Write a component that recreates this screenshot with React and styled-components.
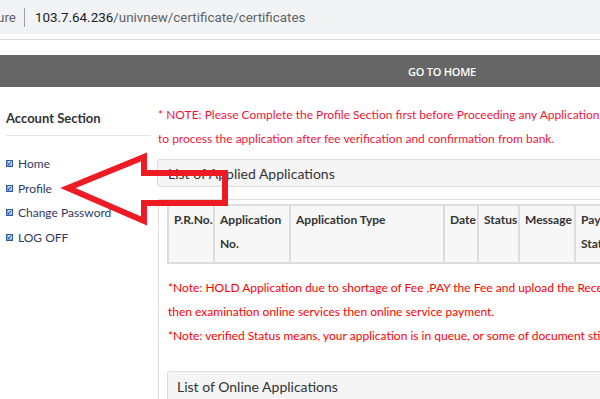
import styled, { createGlobalStyle } from 'styled-components';

const GlobalStyle = createGlobalStyle`
  html, body {
    margin: 0;
    padding: 0;
    background: #fff;
  }
  body {
    width: 600px;
    height: 399px;
    overflow: hidden;
    font-family: Lato, 'Open Sans', sans-serif;
  }
`;

const menu = ['Home', 'Profile', 'Change Password', 'LOG OFF'];

const columns = [
  { label: 'P.R.No.', w: 46 },
  { label: 'Application No.', w: 76 },
  { label: 'Application Type', w: 154 },
  { label: 'Date', w: 34 },
  { label: 'Status', w: 41 },
  { label: 'Message', w: 56 },
  { label: 'Payment Status', w: 70 },
];

const Bullet = () => (
  <svg width='7' height='7' viewBox='0 0 7 7'>
    <rect x='0.5' y='0.5' width='6' height='6' fill='#7fa6d8' stroke='#2b5d9e' />
    <path d='M2 2h3v3' fill='none' stroke='#fff' strokeWidth='1' />
    <path d='M2 5l3-3' stroke='#1d4f8f' strokeWidth='1' />
  </svg>
);

const Arrow = () => (
  <ArrowSvg width='180' height='90' viewBox='60 145 180 90'>
    <polygon
      points='68,188 144,157 144,173 225,173 225,203 144,203 144,221'
      fill='none'
      stroke='#ed1c24'
      strokeWidth='6'
      strokeLinejoin='miter'
    />
  </ArrowSvg>
);

export default function App() {
  return (
    <>
      <GlobalStyle />
      <Screen>
        <AddressBar>
          <Scheme>ure</Scheme>
          <Sep />
          <Url>
            <Host>103.7.64.236</Host>/univnew/certificate/certificates
          </Url>
        </AddressBar>
        <BarRule />
        <NavBar>
          <NavLink>GO TO HOME</NavLink>
        </NavBar>
        <Page>
          <Sidebar>
            <SideTitle>Account Section</SideTitle>
            <Menu>
              {menu.map((m) => (
                <MenuItem key={m}>
                  <Bullet />
                  {m}
                </MenuItem>
              ))}
            </Menu>
          </Sidebar>
          <Main>
            <TopNote>
              * NOTE: Please Complete the Profile Section first before Proceeding any Application for
              <br />
              to process the application after fee verification and confirmation from bank.
            </TopNote>
            <PanelHead>List of Applied Applications</PanelHead>
            <PanelBody>
              <Table>
                <colgroup>
                  {columns.map((c) => (
                    <col key={c.label} style={{ width: c.w }} />
                  ))}
                </colgroup>
                <thead>
                  <tr>
                    {columns.map((c) => (
                      <Th key={c.label}>{c.label}</Th>
                    ))}
                  </tr>
                </thead>
              </Table>
              <Notes>
                <Note>*Note: HOLD Application due to shortage of Fee ,PAY the Fee and upload the Receipt</Note>
                <Note>then examination online services then online service payment.</Note>
                <Note>*Note: verified Status means, your application is in queue, or some of document still</Note>
              </Notes>
              <InnerHead>List of Online Applications</InnerHead>
            </PanelBody>
          </Main>
          <Arrow />
        </Page>
      </Screen>
    </>
  );
}

const Screen = styled.div`
  width: 600px;
  height: 399px;
  overflow: hidden;
  position: relative;
`;

const AddressBar = styled.div`
  height: 34px;
  background: #f1f3f4;
  display: flex;
  align-items: center;
  font-family: Roboto, 'Noto Sans', sans-serif;
  font-size: 13.4px;
  color: #5f6368;
  white-space: nowrap;
`;

const Scheme = styled.span`
  margin-left: -3px;
  color: #5f6368;
`;

const Sep = styled.span`
  width: 1px;
  height: 19px;
  background: #9aa0a6;
  margin: 0 10px 0 8px;
`;

const Url = styled.span`
  color: #5f6368;
`;

const Host = styled.span`
  color: #202124;
`;

const BarRule = styled.div`
  margin-top: 5px;
  height: 1px;
  background: #dadce0;
`;

const NavBar = styled.div`
  margin-top: 15px;
  height: 32px;
  background: #666;
  display: flex;
  align-items: center;
  padding-left: 408px;
`;

const NavLink = styled.span`
  color: #fff;
  font-family: 'Open Sans', sans-serif;
  font-size: 11px;
  font-weight: 600;
  letter-spacing: -0.25px;
`;

const Page = styled.div`
  display: flex;
  align-items: flex-start;
`;

const Sidebar = styled.div`
  width: 151px;
  flex-shrink: 0;
  padding: 22px 0 0 6px;
`;

const SideTitle = styled.div`
  font-size: 13px;
  font-weight: 700;
  line-height: 18px;
  color: #333;
  padding-bottom: 8px;
  border-bottom: 1px solid #e6e6e6;
  margin-right: 6px;
`;

const Menu = styled.div`
  margin-top: 15px;
  display: flex;
  flex-direction: column;
`;

const MenuItem = styled.div`
  height: 24.7px;
  display: flex;
  align-items: center;
  gap: 5px;
  font-size: 12px;
  color: #2f3a5e;
`;

const Main = styled.div`
  flex: 1;
  min-width: 0;
  padding-top: 16px;
`;

const TopNote = styled.div`
  font-size: 12px;
  line-height: 24px;
  color: #f0163a;
  white-space: nowrap;
  padding-left: 1px;
`;

const PanelHead = styled.div`
  margin-top: 8px;
  height: 26px;
  border: 1px solid #ddd;
  border-right: none;
  border-radius: 3px 0 0 3px;
  background: #f5f5f5;
  display: flex;
  align-items: center;
  padding-left: 10px;
  font-size: 14px;
  color: #333;
  white-space: nowrap;
`;

const PanelBody = styled.div`
  margin: 12px 0 0 1px;
  border-top: 1px solid #ddd;
  border-left: 1px solid #ddd;
  padding: 4px 0 0 8px;
  height: 200px;
`;

const Table = styled.table`
  border-collapse: collapse;
  table-layout: fixed;
  width: 477px;
  background: #f7f7f7;
`;

const Th = styled.th`
  border: 2px solid #ddd;
  text-align: left;
  vertical-align: top;
  padding: 2px 5px 6px;
  height: 44px;
  font-size: 12px;
  font-weight: 700;
  line-height: 24px;
  color: #333;
  overflow: hidden;
  white-space: normal;
`;

const Notes = styled.div`
  margin-top: 12px;
  padding-left: 1px;
`;

const Note = styled.div`
  font-size: 12px;
  line-height: 24px;
  color: #f00;
  white-space: nowrap;
`;

const InnerHead = styled.div`
  margin-top: 23px;
  height: 28px;
  border: 1px solid #ddd;
  border-right: none;
  border-radius: 3px 0 0 3px;
  background: #f5f5f5;
  display: flex;
  align-items: center;
  padding-left: 9px;
  font-size: 14px;
  color: #333;
  white-space: nowrap;
`;

const ArrowSvg = styled.svg`
  position: absolute;
  left: 60px;
  top: 145px;
  pointer-events: none;
`;
